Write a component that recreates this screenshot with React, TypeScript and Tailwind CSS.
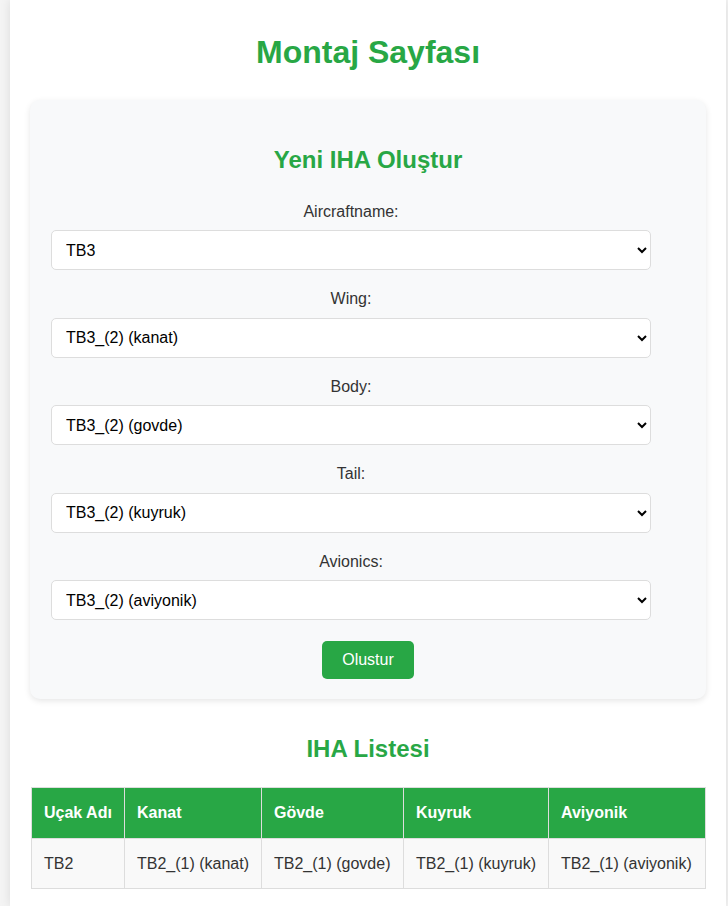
import React from "react";

const font = { fontFamily: '"Liberation Sans", Arial, sans-serif' };

const groups = [
  { label: "Aircraftname:", value: "TB3" },
  { label: "Wing:", value: "TB3_(2) (kanat)" },
  { label: "Body:", value: "TB3_(2) (govde)" },
  { label: "Tail:", value: "TB3_(2) (kuyruk)" },
  { label: "Avionics:", value: "TB3_(2) (aviyonik)" },
];

const cols = [
  { h: "Uçak Adı", v: "TB2", w: 93 },
  { h: "Kanat", v: "TB2_(1) (kanat)", w: 137 },
  { h: "Gövde", v: "TB2_(1) (govde)", w: 142 },
  { h: "Kuyruk", v: "TB2_(1) (kuyruk)", w: 145 },
  { h: "Aviyonik", v: "TB2_(1) (aviyonik)", w: 157 },
];

export default function App() {
  return (
    <div className="min-h-[906px] bg-[#f4f4f4] pl-[10px]" style={font}>
      <div className="w-[716px] min-h-[906px] bg-white px-[20px] pt-[34px] shadow-[0_0_10px_rgba(0,0,0,0.1)]">
        <h1 className="text-center text-[32px] leading-[37px] font-bold text-[#28a745]">
          Montaj Sayfası
        </h1>
        <div className="mt-[29px] rounded-[10px] bg-[#f8f9fa] px-[20px] pt-[46px] pb-[20px] shadow-[0_2px_6px_rgba(0,0,0,0.1)]">
          <h2 className="text-center text-[24px] leading-[28px] font-bold text-[#28a745]">
            Yeni IHA Oluştur
          </h2>
          <div className="mt-[29px] ml-[1px] w-[600px]">
            {groups.map((g) => (
              <div key={g.label} className="mb-[20px] flex flex-col">
                <label className="mb-[9px] block text-center text-[16px] leading-[18.4px] text-[#333]">
                  {g.label}
                </label>
                <select
                  defaultValue={g.value}
                  className="h-[40px] w-[600px] rounded-[5px] border border-[#ddd] bg-white px-[10px] text-[16px] text-black"
                >
                  <option value={g.value}>{g.value}</option>
                </select>
              </div>
            ))}
          </div>
          <div className="flex justify-center pt-[1px]">
            <button className="h-[38px] rounded-[5px] bg-[#28a745] px-[20px] text-[16px] text-white">
              Olustur
            </button>
          </div>
        </div>
        <h2 className="mt-[36px] text-center text-[24px] leading-[28px] font-bold text-[#28a745]">
          IHA Listesi
        </h2>
        <table className="mt-[24px] ml-[1px] w-[674px] table-fixed border-collapse text-[16px]">
          <colgroup>
            {cols.map((c) => (
              <col key={c.h} style={{ width: c.w }} />
            ))}
          </colgroup>
          <thead>
            <tr className="h-[51px] bg-[#28a745]">
              {cols.map((c) => (
                <th
                  key={c.h}
                  className="border border-[#ddd] px-[12px] text-left font-bold text-white"
                >
                  {c.h}
                </th>
              ))}
            </tr>
          </thead>
          <tbody>
            <tr className="h-[50px] bg-[#f9f9f9]">
              {cols.map((c) => (
                <td
                  key={c.h}
                  className="border border-[#ddd] px-[12px] whitespace-nowrap text-[#333]"
                >
                  {c.v}
                </td>
              ))}
            </tr>
          </tbody>
        </table>
      </div>
    </div>
  );
}
